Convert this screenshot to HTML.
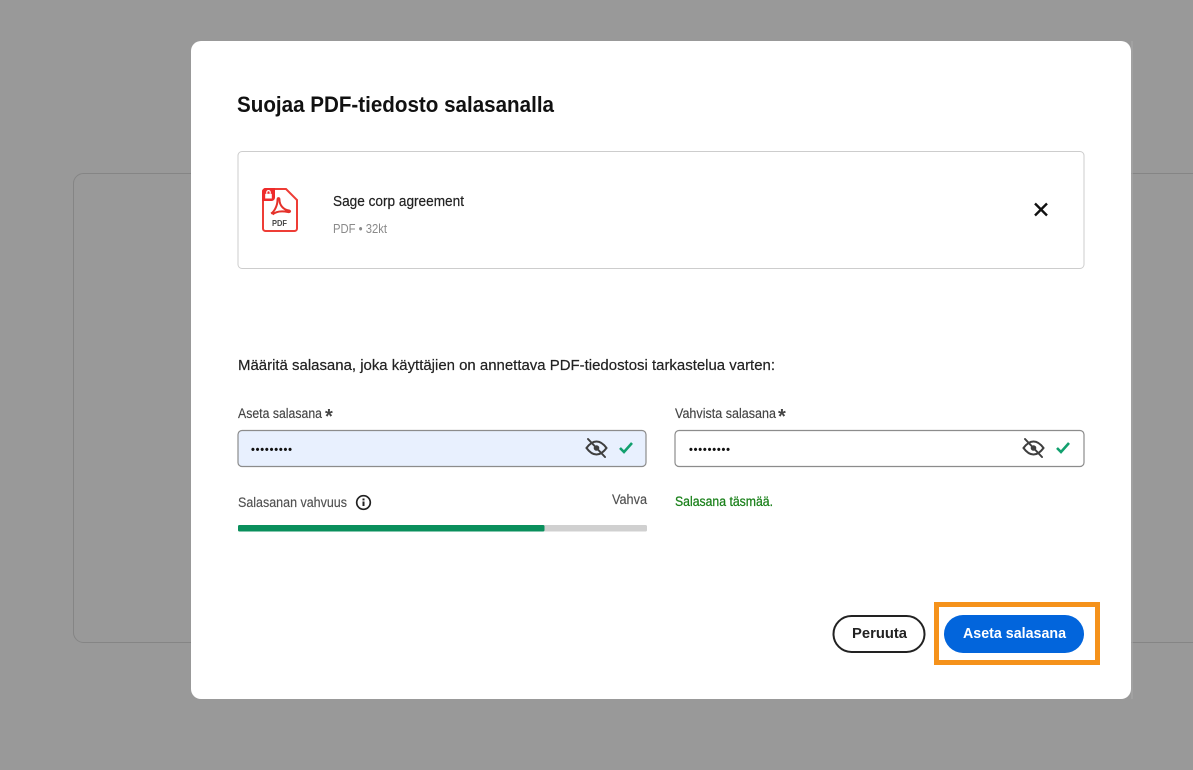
<!DOCTYPE html>
<html lang="fi">
<head>
<meta charset="utf-8">
<title>Suojaa PDF-tiedosto salasanalla</title>
<style>
html,body{margin:0;padding:0;width:1193px;height:770px;overflow:hidden;background:#999}
svg{display:block}
text{font-family:"Liberation Sans",sans-serif}
</style>
</head>
<body>
<svg width="1193" height="770" viewBox="0 0 1193 770" xmlns="http://www.w3.org/2000/svg">
<defs><g id="eye" fill="none" stroke="#3f3f3f" stroke-width="2" stroke-linecap="round">
<path d="M-10 0C-6-5.500-3-6.500 0-6.500S6-5.500 10 0C6 5.500 3 6.500 0 6.500S-6 5.500-10 0Z"/>
<circle cx="0" cy="0" r="2.800" fill="#3f3f3f" stroke="none"/>
<path d="M-8.500-9L8.500 9"/></g>
<path id="chk" d="M-6 0.500L-2 4.500L6-4.500" fill="none" stroke="#12a06e" stroke-width="2.600"/></defs>
<rect width="1193" height="770" fill="#999"/>
<rect x="73.500" y="173.500" width="1200" height="469" rx="10" fill="none" stroke="#858585"/>
<rect x="191" y="41" width="940" height="658" rx="10" fill="#fff"/>
<rect x="1131" y="41" width="2" height="658" fill="#a6a6a6" opacity=".6"/>

<text x="237" y="112" font-size="22" font-weight="700" fill="#111" textLength="317" lengthAdjust="spacingAndGlyphs">Suojaa PDF-tiedosto salasanalla</text>

<rect x="238" y="151.500" width="846" height="117" rx="4" fill="#fff" stroke="#cdcdcd"/>

<path d="M265 189H286L297 200V228.500A2.500 2.500 0 0 1 294.500 231H265.500A2.500 2.500 0 0 1 263 228.500V191Z" fill="#fff" stroke="#ee3d36" stroke-width="2"/>
<path d="M262 191.500A3.500 3.500 0 0 1 265.500 188H275V197.500A3.500 3.500 0 0 1 271.500 201H262Z" fill="#ee2b2b"/>
<rect x="265.200" y="193.800" width="6.600" height="4.700" fill="#fff"/>
<path d="M266.800 193.800V192.300A1.700 1.700 0 0 1 270.200 192.300V193.800" fill="none" stroke="#fff" stroke-width="1.200"/>
<path d="M271 213.500C274 212 277.500 206 277.500 200C277.500 197.500 279.500 197.500 279.500 200C279.500 205 283.500 210 289 210.500C291 211 290 212.500 288 212C283 211 277 210.500 272.500 214.500" fill="none" stroke="#e5322b" stroke-width="2"/>
<text x="272" y="226" font-size="8.500" font-weight="700" fill="#484848" textLength="15" lengthAdjust="spacingAndGlyphs">PDF</text>

<text x="333" y="206" font-size="15" fill="#222" stroke="#222" stroke-width=".2" textLength="131" lengthAdjust="spacingAndGlyphs">Sage corp agreement</text>
<text x="333" y="233" font-size="12.500" fill="#8a8a8a" textLength="54" lengthAdjust="spacingAndGlyphs">PDF • 32kt</text>
<path d="M1035 203.500L1047 215.500M1047 203.500L1035 215.500" stroke="#111" stroke-width="2.400" fill="none"/>

<text x="238" y="370" font-size="15" fill="#222" stroke="#222" stroke-width=".2" textLength="537" lengthAdjust="spacingAndGlyphs">Määritä salasana, joka käyttäjien on annettava PDF-tiedostosi tarkastelua varten:</text>

<text x="238" y="418" font-size="13.500" fill="#444" stroke="#444" stroke-width=".15" textLength="84" lengthAdjust="spacingAndGlyphs">Aseta salasana</text>
<text x="325" y="423" font-size="20" font-weight="700" fill="#444">*</text>
<rect x="238" y="430.500" width="408" height="36" rx="4" fill="#e8f0fe" stroke="#8c8c8c" stroke-width="1.200"/>
<text x="251" y="453" font-size="11" font-weight="700" fill="#111" textLength="41" lengthAdjust="spacing">•••••••••</text>
<use href="#eye" x="596.500" y="448"/>
<use href="#chk" x="626" y="447.500"/>

<text x="675" y="418" font-size="13.500" fill="#444" stroke="#444" stroke-width=".15" textLength="101" lengthAdjust="spacingAndGlyphs">Vahvista salasana</text>
<text x="778" y="423" font-size="20" font-weight="700" fill="#444">*</text>
<rect x="675" y="430.500" width="409" height="36" rx="4" fill="#fff" stroke="#8c8c8c" stroke-width="1.200"/>
<text x="689" y="453" font-size="11" font-weight="700" fill="#111" textLength="41" lengthAdjust="spacing">•••••••••</text>
<use href="#eye" x="1033.500" y="448"/>
<use href="#chk" x="1063" y="447.500"/>

<text x="238" y="507" font-size="13.500" fill="#505050" stroke="#505050" stroke-width=".15" textLength="109" lengthAdjust="spacingAndGlyphs">Salasanan vahvuus</text>
<circle cx="363.500" cy="502.500" r="6.800" fill="none" stroke="#222" stroke-width="1.700"/>
<rect x="362.500" y="501.500" width="2" height="4.500" fill="#222"/>
<rect x="362.500" y="498.500" width="2" height="1.900" fill="#222"/>
<text x="612" y="504" font-size="13.500" fill="#505050" stroke="#505050" stroke-width=".15" textLength="35" lengthAdjust="spacingAndGlyphs">Vahva</text>
<rect x="238" y="525" width="409" height="6.500" rx="1.500" fill="#d0d0d0"/>
<rect x="238" y="525" width="306.500" height="6.500" rx="1.500" fill="#0a8f5c"/>

<text x="675" y="506" font-size="13.500" fill="#1a801a" stroke="#1a801a" stroke-width=".25" textLength="98" lengthAdjust="spacingAndGlyphs">Salasana täsmää.</text>

<rect x="833.500" y="616" width="91" height="36" rx="18" fill="#fff" stroke="#222" stroke-width="2"/>
<text x="852" y="638" font-size="15" font-weight="700" fill="#222" textLength="55" lengthAdjust="spacingAndGlyphs">Peruuta</text>
<rect x="944" y="615" width="140" height="38" rx="19" fill="#0265dc"/>
<text x="963" y="638" font-size="15" font-weight="700" fill="#fff" textLength="103" lengthAdjust="spacingAndGlyphs">Aseta salasana</text>
<rect x="936.500" y="604.500" width="161" height="58" fill="none" stroke="#f5921b" stroke-width="5"/>
</svg>
</body>
</html>
